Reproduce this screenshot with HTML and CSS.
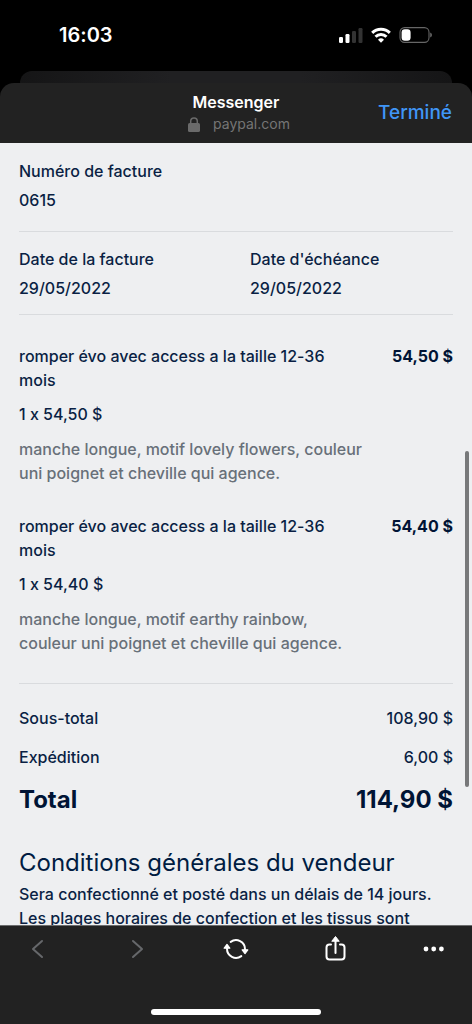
FILE: index.html
```html
<!DOCTYPE html>
<html lang="fr">
<head>
<meta charset="utf-8">
<meta name="viewport" content="width=device-width, initial-scale=1">
<title>Facture 0615</title>
<link rel="stylesheet" href="styles.css">
</head>
<body>
<div class="screen">
  <div class="status-bar">
    <time class="clock">16:03</time>
    <div class="status-icons">
      <svg width="24" height="16" viewBox="0 0 24 16" aria-hidden="true">
        <rect x="0" y="10" width="4" height="6" rx="1.2" fill="#fff"/>
        <rect x="6.500" y="7" width="4" height="9" rx="1.2" fill="#fff"/>
        <rect x="13" y="4" width="4" height="12" rx="1.2" fill="#333"/>
        <rect x="19.500" y="1" width="4" height="15" rx="1.2" fill="#333"/>
      </svg>
      <svg width="20" height="16" viewBox="0 0 20 16" fill="none" stroke="#fff" stroke-width="3" aria-hidden="true">
        <path d="M1.200 5.900a12.500 12.500 0 0 1 17.600 0"/>
        <path d="M4.500 9.800a7.800 7.800 0 0 1 11 0"/>
        <path d="M10 15.800 7 12.800a4.300 4.300 0 0 1 6 0z" fill="#fff" stroke="none"/>
      </svg>
      <svg width="34" height="16" viewBox="0 0 34 16" aria-hidden="true">
        <rect x="1" y=".6" width="29" height="14.800" rx="4.600" fill="none" stroke="#666" stroke-width="1.100"/>
        <rect x="2.600" y="2.200" width="9" height="11.600" rx="3.200" fill="#fff"/>
        <path d="M31.200 5.400q1.800.9 1.800 2.600t-1.800 2.600z" fill="#666"/>
      </svg>
    </div>
  </div>
  <div class="back-sheet"></div>
  <header class="sheet-header">
    <div class="heading">
      <h1 class="app-name">Messenger</h1>
      <p class="site">
        <svg width="12" height="15" viewBox="0 0 12 15" aria-hidden="true">
          <rect x="0" y="6" width="12" height="9" rx="1.600" fill="#6a6a6a"/>
          <path d="M2.700 7V4.200a3.300 3.300 0 0 1 6.600 0V7" fill="none" stroke="#6a6a6a" stroke-width="1.500"/>
        </svg>
        <span>paypal.com</span>
      </p>
    </div>
    <button class="done" type="button">Terminé</button>
  </header>
  <main class="content">
    <section class="fields">
      <dl class="field">
        <dt>Numéro de facture</dt>
        <dd>0615</dd>
      </dl>
    </section>
    <section class="fields fields-dates">
      <dl class="field">
        <dt>Date de la facture</dt>
        <dd>29/05/2022</dd>
      </dl>
      <dl class="field">
        <dt>Date d'échéance</dt>
        <dd>29/05/2022</dd>
      </dl>
    </section>
    <section class="items">
      <article class="item">
        <div class="item-info">
          <h2 class="item-name">romper évo avec access a la taille 12-36 mois</h2>
          <p class="item-qty">1 x 54,50 $</p>
          <p class="item-desc">manche longue, motif lovely flowers, couleur uni poignet et cheville qui agence.</p>
        </div>
        <strong class="item-price">54,50 $</strong>
      </article>
      <article class="item">
        <div class="item-info">
          <h2 class="item-name">romper évo avec access a la taille 12-36 mois</h2>
          <p class="item-qty">1 x 54,40 $</p>
          <p class="item-desc">manche longue, motif earthy rainbow, couleur uni poignet et cheville qui agence.</p>
        </div>
        <strong class="item-price">54,40 $</strong>
      </article>
    </section>
    <section class="totals">
      <div class="total-row"><span>Sous-total</span><span>108,90 $</span></div>
      <div class="total-row"><span>Expédition</span><span>6,00 $</span></div>
      <div class="total-row grand-total"><span>Total</span><span>114,90 $</span></div>
    </section>
    <section class="terms">
      <h2 class="terms-title">Conditions générales du vendeur</h2>
      <p>Sera confectionné et posté dans un délais de 14 jours. Les plages horaires de confection et les tissus sont</p>
    </section>
    <div class="scroll-thumb"></div>
  </main>
  <footer class="toolbar">
    <nav class="tools">
      <button class="tool" type="button" aria-label="Précédent">
        <svg width="24" height="28" viewBox="0 0 24 28" fill="none" stroke="#66686b" stroke-width="2" stroke-linecap="round" stroke-linejoin="round"><path d="M16 6 7 14l9 8"/></svg>
      </button>
      <button class="tool" type="button" aria-label="Suivant">
        <svg width="24" height="28" viewBox="0 0 24 28" fill="none" stroke="#66686b" stroke-width="2" stroke-linecap="round" stroke-linejoin="round"><path d="m8 6 9 8-9 8"/></svg>
      </button>
      <button class="tool" type="button" aria-label="Actualiser">
        <svg width="26" height="28" viewBox="0 0 26 28" fill="none" stroke="#fff" stroke-width="2" stroke-linecap="round" stroke-linejoin="round">
          <path d="M7.700 6.900A9 9 0 0 1 22 14.200"/>
          <path d="M18.300 21.100A9 9 0 0 1 4 13.800"/>
          <path d="M19.200 14.800h5.600l-2.800 3.800z" fill="#fff" stroke-width="1.200"/>
          <path d="M6.800 13.200H1.200l2.800-3.800z" fill="#fff" stroke-width="1.200"/>
        </svg>
      </button>
      <button class="tool" type="button" aria-label="Partager">
        <svg width="24" height="28" viewBox="0 0 24 28" fill="none" stroke="#fff" stroke-width="2" stroke-linecap="round" stroke-linejoin="round">
          <path d="M7 9.500H5.500A3 3 0 0 0 2.500 12.500V21.500a3 3 0 0 0 3 3h12a3 3 0 0 0 3-3v-9a3 3 0 0 0-3-3H16"/>
          <path d="M11.500 18V4"/>
          <path d="M8 6 11.500 1.500 15 6z" fill="#fff" stroke-width="1"/>
        </svg>
      </button>
      <button class="tool" type="button" aria-label="Plus">
        <svg width="24" height="28" viewBox="0 0 24 28" fill="#fff"><circle cx="4" cy="14" r="2.400"/><circle cx="11.700" cy="14" r="2.400"/><circle cx="19.400" cy="14" r="2.400"/></svg>
      </button>
    </nav>
    <div class="home-indicator"></div>
  </footer>
</div>
</body>
</html>
```
FILE: styles.css
```css
* {
  box-sizing: border-box;
}

body,
h1,
h2,
p,
dl,
dd {
  margin: 0;
}

body {
  background: #000;
  color: #0a1f44;
  font-family: Inter, "Liberation Sans", sans-serif;
  font-size: 16px;
  font-weight: 500;
  line-height: 24px;
  font-feature-settings: "calt" 0;
}

button {
  padding: 0;
  border: 0;
  background: none;
  font: inherit;
}

svg {
  display: block;
}

.screen {
  display: flex;
  flex-direction: column;
  height: 100vh;
}

.status-bar {
  display: flex;
  justify-content: space-between;
  align-items: center;
  padding: 20px 39px 21px 59px;
  color: #fff;
}

.clock {
  font-size: 20px;
  font-weight: 600;
  line-height: 30px;
}

.status-icons {
  display: flex;
  gap: 8px;
}

.back-sheet {
  height: 24px;
  margin: 0 20px -12px;
  border-radius: 12px 12px 0 0;
  background: linear-gradient(90deg, #151516, #202022 35%, #202022 65%, #151516);
}

.sheet-header {
  position: relative;
  display: grid;
  grid-template-columns: 1fr auto 1fr;
  align-items: center;
  padding: 8px 20px;
  border-radius: 14px 14px 0 0;
  background: #222;
}

.heading {
  grid-column: 2;
  text-align: center;
}

.app-name {
  color: #fff;
  font-size: 16px;
  font-weight: 600;
  line-height: 22px;
}

.site {
  display: flex;
  justify-content: center;
  align-items: center;
  gap: 13px;
  padding-left: 6px;
  color: #757575;
  font-size: 14px;
  font-weight: 400;
  line-height: 22px;
}

.done {
  justify-self: end;
  color: #4096f7;
  font-size: 19px;
  font-weight: 500;
}

.content {
  position: relative;
  flex: 1;
  min-height: 0;
  overflow: hidden;
  padding: 16px 19px 0;
  background: #eeeff1;
}

.fields {
  padding-bottom: 19px;
  border-bottom: 1px solid #d9dbde;
}

.fields-dates {
  display: grid;
  grid-template-columns: 231px 1fr;
  padding: 15px 0 14px;
}

.field {
  display: grid;
  gap: 5px;
}

.items {
  display: grid;
  gap: 29px;
  padding: 29px 0 28px;
  border-bottom: 1px solid #d9dbde;
}

.item {
  display: grid;
  grid-template-columns: 1fr auto;
  gap: 25px;
}

.item-name {
  padding-right: 24px;
  font-size: 16px;
  font-weight: 500;
}

.item-qty {
  margin: 10px 0 11px;
}

.item-desc {
  color: #687079;
}

.item-price {
  color: #001435;
  font-weight: 700;
}

.totals {
  display: grid;
  gap: 15px;
  padding-top: 22px;
}

.total-row {
  display: flex;
  justify-content: space-between;
}

.grand-total {
  color: #001435;
  font-size: 24px;
  font-weight: 700;
  line-height: 32px;
}

.terms {
  padding-top: 31px;
}

.terms-title {
  padding-bottom: 3px;
  color: #001c42;
  font-size: 24px;
  font-weight: 400;
  line-height: 32px;
}

.scroll-thumb {
  position: absolute;
  top: 308px;
  right: 3px;
  width: 4px;
  height: 336px;
  border-radius: 2px;
  background: #77787a;
}

.toolbar {
  padding-bottom: 9px;
  border-top: 1px solid #6b6c6d;
  background: #222;
}

.tools {
  display: flex;
  justify-content: space-between;
  padding: 9px 26px 46px;
}

.tool {
  display: block;
}

.home-indicator {
  width: 36%;
  height: 6px;
  margin: 0 auto;
  border-radius: 3px;
  background: #fff;
}
```
